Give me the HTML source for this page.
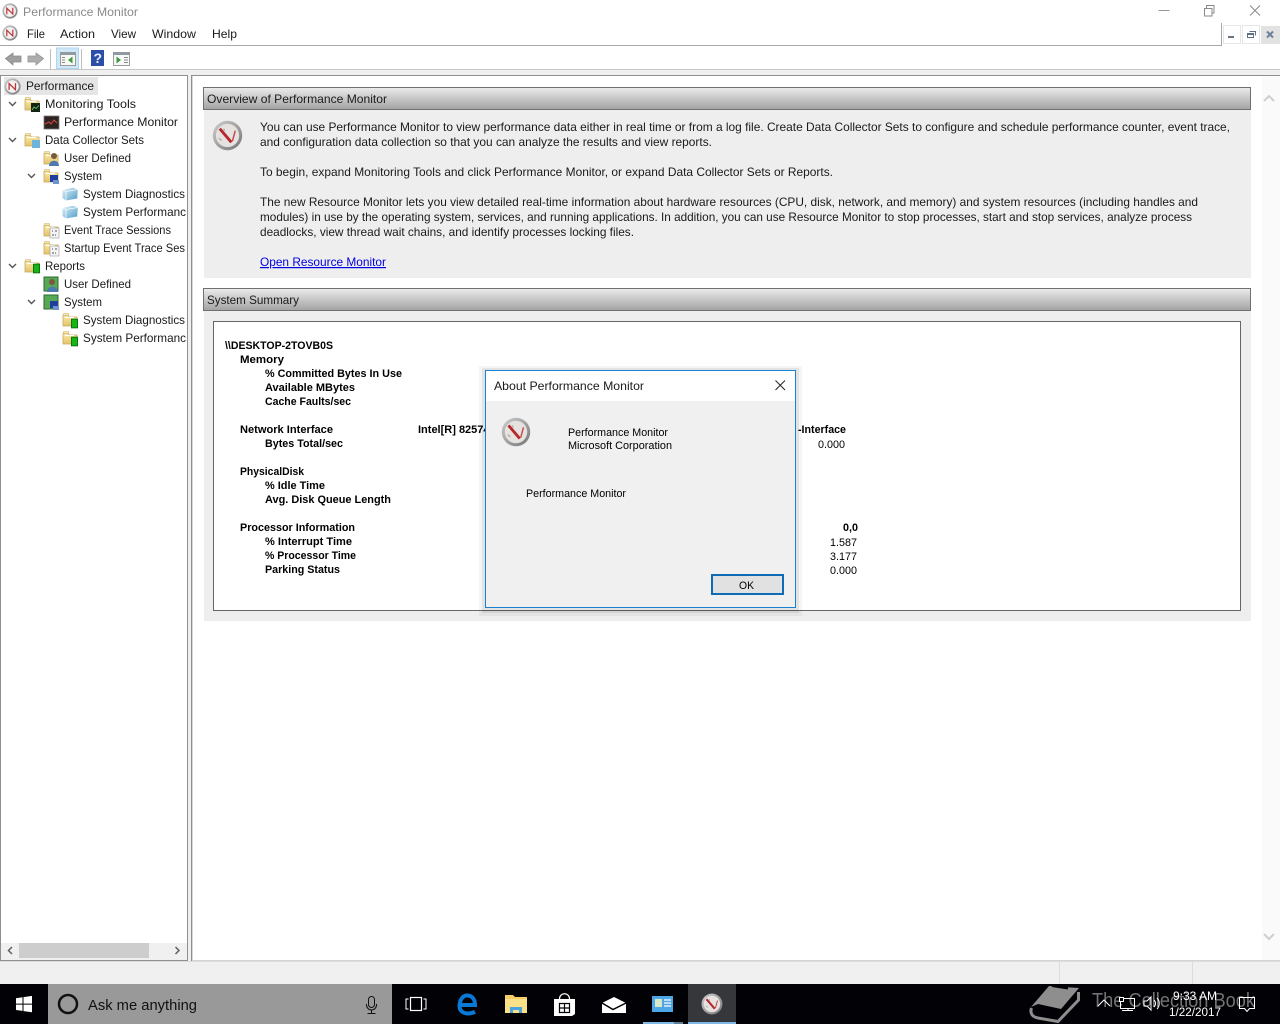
<!DOCTYPE html>
<html lang="en"><head><meta charset="utf-8"><title>Performance Monitor</title>
<style>
html,body{margin:0;padding:0;width:1280px;height:1024px;overflow:hidden;background:#fff}
svg{display:block;position:absolute;left:0;top:0}
text{font-family:"Liberation Sans",sans-serif;font-size:12px;fill:#1a1a1a;white-space:pre}
.b{font-weight:bold;font-size:11px;fill:#000}
.d{font-size:11px;fill:#000}
.p{font-size:12px;fill:#1a1a1a}
</style></head><body>
<svg width="1280" height="1024" viewBox="0 0 1280 1024" xmlns="http://www.w3.org/2000/svg">
<defs>
<linearGradient id="hd" x1="0" y1="0" x2="0" y2="1"><stop offset="0" stop-color="#ececec"/><stop offset="1" stop-color="#a2a2a2"/></linearGradient>
<linearGradient id="ring" x1="0" y1="0" x2="1" y2="1"><stop offset="0" stop-color="#cfcfcf"/><stop offset="1" stop-color="#757575"/></linearGradient>
<linearGradient id="fold" x1="0" y1="0" x2="0" y2="1"><stop offset="0" stop-color="#fbeaa6"/><stop offset="1" stop-color="#e3c26c"/></linearGradient>
<linearGradient id="cube" x1="0" y1="0" x2="1" y2="1"><stop offset="0" stop-color="#e2f2f9"/><stop offset="1" stop-color="#4f9ec9"/></linearGradient>
<symbol id="pm" viewBox="0 0 16 16"><circle cx="8" cy="8" r="7.600" fill="url(#ring)"/><circle cx="8" cy="8" r="5.900" fill="#f3f0f0"/><path d="M4.800 11.200V5.200L10.800 11V4.800" fill="none" stroke="#b8353a" stroke-width="1.200"/></symbol>
<symbol id="pmL" viewBox="0 0 32 32"><circle cx="16" cy="16" r="15.200" fill="url(#ring)"/><circle cx="16" cy="16" r="12" fill="#e6e2e0"/><path d="M8 9L20 23" stroke="#b5282c" stroke-width="3"/><path d="M21 22L24 11" stroke="#c2484a" stroke-width="1.500"/><path d="M7 19l3 2M12 9l1 2" stroke="#aaa" stroke-width="1.300"/></symbol>
<symbol id="folder" viewBox="0 0 16 16"><path d="M1 3.500h5l1.500 1.500H15V14H1z" fill="url(#fold)" stroke="#c9a95f" stroke-width=".8"/><path d="M1.500 1.500h5v2h-5z" fill="#f5e7b5" stroke="#cdb26f" stroke-width=".6"/><path d="M3 5.500h9" stroke="#fff" stroke-width="1"/></symbol>
<symbol id="cubeI" viewBox="0 0 16 14"><path d="M.5 3L11 .8 15.800 2.500 15.200 11.500 4 13.500 .5 11z" fill="url(#cube)"/><path d="M4 4.500V13.500M.5 3L4 4.500 15.800 2.500" fill="none" stroke="#f4fbfe" stroke-width=".8"/></symbol>
<symbol id="green" viewBox="0 0 8 11"><rect x=".5" y=".5" width="7" height="10" fill="#15b515" stroke="#0b6b0b"/></symbol>
</defs>

<!-- title -->
<use href="#pm" x="2" y="3" width="16" height="16"/>
<text x="23" y="16" textLength="115" lengthAdjust="spacingAndGlyphs" style="fill:#8a8a8a">Performance Monitor</text>
<path d="M1158.500 10.500h11" stroke="#999" stroke-width="1"/>
<rect x="1204.500" y="8.500" width="7.500" height="7.500" fill="#fff" stroke="#8a8a8a"/>
<path d="M1206.500 8V5.500h7.500v7.500h-2" fill="none" stroke="#8a8a8a"/>
<path d="M1250 5.500l10 10M1260 5.500l-10 10" stroke="#8a8a8a" stroke-width="1"/>

<!-- menu -->
<use href="#pm" x="2" y="25" width="16" height="16"/>
<text x="27" y="38" textLength="18" lengthAdjust="spacingAndGlyphs">File</text>
<text x="60" y="38" textLength="35" lengthAdjust="spacingAndGlyphs">Action</text>
<text x="111" y="38" textLength="25" lengthAdjust="spacingAndGlyphs">View</text>
<text x="152" y="38" textLength="44" lengthAdjust="spacingAndGlyphs">Window</text>
<text x="212" y="38" textLength="25" lengthAdjust="spacingAndGlyphs">Help</text>
<path d="M0 45.500H1221.500V23" fill="none" stroke="#a8a8a8"/>
<rect x="1223.500" y="25.500" width="17" height="18" fill="#fff" stroke="#e6e6e6"/>
<rect x="1242.500" y="25.500" width="17" height="18" fill="#fff" stroke="#e6e6e6"/>
<rect x="1261" y="26" width="19" height="18" fill="#e2e2e2"/>
<rect x="1228" y="36" width="6" height="2" fill="#6a7482"/>
<path d="M1247.500 33.500h6v4h-6zM1247.500 34.500h6M1249.500 31.500h6v4" fill="none" stroke="#5f6f85"/>
<path d="M1267 31.500l6 6M1273 31.500l-6 6" stroke="#6d8099" stroke-width="2"/>

<!-- toolbar -->
<path d="M5.500 58.500l7.500-5.500v3h8v6h-8v3z" fill="#9f9f9f" stroke="#8a8a8a" stroke-width=".8"/>
<path d="M43.500 58.500l-7.500-5.500v3h-8v6h8v3z" fill="#adadad" stroke="#949494" stroke-width=".8"/>
<path d="M50.500 49v20" stroke="#bdbdbd"/>
<rect x="56.500" y="48" width="22" height="20.500" fill="#cfe8f8" stroke="#aed6ef"/>
<rect x="60.500" y="52.500" width="15" height="13" fill="#f6f9f6" stroke="#9a9a9a"/>
<rect x="60.500" y="52.500" width="15" height="2.500" fill="#8f9aa3"/>
<path d="M62 57.500h3M62 60h3M62 62.500h3" stroke="#8a8a8a"/><path d="M72.500 56.500v7l-4.500-3.500z" fill="#3f9a3f"/>
<path d="M81.500 49v20" stroke="#bdbdbd"/>
<rect x="91" y="50" width="13" height="16" fill="#2b4fa6"/>
<text x="93.500" y="63" style="font-size:14px;font-weight:bold;fill:#e8eefc">?</text>
<rect x="113.500" y="52.500" width="16" height="13" fill="#f6f9f6" stroke="#9a9a9a"/>
<rect x="113.500" y="52.500" width="16" height="2.500" fill="#8f9aa3"/>
<path d="M124 57.500h4M124 60h4M124 62.500h4" stroke="#8a8a8a"/><path d="M116.500 56.500v7l4.500-3.500z" fill="#3f9a3f"/>
<path d="M0 69.500H1280" stroke="#c8c8c8"/>
<rect x="0" y="70" width="1280" height="891" fill="#f0f0f0"/>

<!-- left panel -->
<rect x=".5" y="75.500" width="187" height="885" fill="#fff" stroke="#8f8f8f"/>
<rect x="4" y="77" width="94" height="18" fill="#e5e5e5"/>
<g>
<use href="#pm" x="4" y="78" width="17" height="17"/>
<text x="26" y="90" textLength="68" lengthAdjust="spacingAndGlyphs">Performance</text>
<g fill="none" stroke="#555" stroke-width="1.400">
<path d="M9 102l3.500 3.500 3.500-3.500M9 138l3.500 3.500 3.500-3.500M9 264l3.500 3.500 3.500-3.500M28 174l3.500 3.500 3.500-3.500M28 300l3.500 3.500 3.500-3.500"/>
</g>
<use href="#folder" x="24" y="96" width="16" height="16"/>
<rect x="31" y="103" width="9" height="9" fill="#142414"/><path d="M32 110l2-3 2 1.500 3-3" stroke="#6fcf6f" fill="none" stroke-width=".8"/>
<text x="45" y="108" textLength="91" lengthAdjust="spacingAndGlyphs">Monitoring Tools</text>
<rect x="44" y="116" width="15" height="13" fill="#2d2422" stroke="#7a7a7a" stroke-width=".8"/><path d="M45 124l4-2 2 2 3-4 3 3" stroke="#d84b3c" fill="none"/>
<text x="64" y="126" textLength="114" lengthAdjust="spacingAndGlyphs">Performance Monitor</text>

<use href="#folder" x="24" y="132" width="16" height="16"/>
<rect x="32" y="140" width="8" height="8" fill="#6fb3da"/>
<text x="45" y="144" textLength="99" lengthAdjust="spacingAndGlyphs">Data Collector Sets</text>
<use href="#folder" x="43" y="150" width="16" height="16"/>
<circle cx="54" cy="156" r="3" fill="#7a5a3c"/><path d="M49 166c0-7 10-7 10 0z" fill="#4b79b0"/>
<text x="64" y="162" textLength="67" lengthAdjust="spacingAndGlyphs">User Defined</text>
<use href="#folder" x="43" y="168" width="16" height="16"/>
<rect x="50" y="175" width="8" height="7" fill="#1e3f9c"/><rect x="53" y="180" width="6" height="4" fill="#6e93cf"/>
<text x="64" y="180" textLength="38" lengthAdjust="spacingAndGlyphs">System</text>
<use href="#cubeI" x="62" y="187" width="16" height="14"/>
<text x="83" y="198" textLength="102" lengthAdjust="spacingAndGlyphs">System Diagnostics</text>
<use href="#cubeI" x="62" y="205" width="16" height="14"/>
<text x="83" y="216" textLength="103" lengthAdjust="spacingAndGlyphs">System Performanc</text>
<use href="#folder" x="43" y="222" width="16" height="16"/>
<rect x="50" y="228" width="9" height="10" fill="#f4f4f4" stroke="#999" stroke-width=".6"/><path d="M52 231h1M55 231h2M52 235h2M55 235h1" stroke="#555"/>
<text x="64" y="234" textLength="107" lengthAdjust="spacingAndGlyphs">Event Trace Sessions</text>
<use href="#folder" x="43" y="240" width="16" height="16"/>
<rect x="50" y="246" width="9" height="10" fill="#f4f4f4" stroke="#999" stroke-width=".6"/><path d="M52 249h1M55 249h2M52 253h2M55 253h1" stroke="#555"/>
<text x="64" y="252" textLength="121" lengthAdjust="spacingAndGlyphs">Startup Event Trace Ses</text>

<use href="#folder" x="24" y="258" width="16" height="16"/>
<use href="#green" x="33" y="263" width="7" height="11"/>
<text x="45" y="270" textLength="40" lengthAdjust="spacingAndGlyphs">Reports</text>
<rect x="44" y="277" width="14" height="14" fill="#57a857" stroke="#2e6b2e"/>
<circle cx="52" cy="282" r="3" fill="#7a5a3c"/><path d="M47 292c0-7 11-7 11 0z" fill="#4b79b0"/>
<text x="64" y="288" textLength="67" lengthAdjust="spacingAndGlyphs">User Defined</text>
<rect x="44" y="295" width="14" height="14" fill="#57a857" stroke="#2e6b2e"/>
<rect x="50" y="301" width="8" height="7" fill="#1e3f9c"/><rect x="53" y="306" width="6" height="4" fill="#6e93cf"/>
<text x="64" y="306" textLength="38" lengthAdjust="spacingAndGlyphs">System</text>
<use href="#folder" x="62" y="312" width="16" height="16"/>
<use href="#green" x="71" y="318" width="7" height="11"/>
<text x="83" y="324" textLength="102" lengthAdjust="spacingAndGlyphs">System Diagnostics</text>
<use href="#folder" x="62" y="330" width="16" height="16"/>
<use href="#green" x="71" y="336" width="7" height="11"/>
<text x="83" y="342" textLength="103" lengthAdjust="spacingAndGlyphs">System Performanc</text>
</g>
<!-- left scrollbar -->
<rect x="1" y="943" width="186" height="17" fill="#f0f0f0"/>
<rect x="19" y="943" width="130" height="15" fill="#cdcdcd"/>
<path d="M12 947l-3.500 3.500 3.500 3.500M175.500 947l3.500 3.500-3.500 3.500" fill="none" stroke="#606060" stroke-width="1.500"/>

<!-- right panel -->
<rect x="192" y="76" width="1088" height="885" fill="#fff"/>
<path d="M191.500 961V75.500H1280" fill="none" stroke="#8f8f8f"/>
<path d="M192.500 960V76" stroke="#d8d8d8"/>
<path d="M192 960.500H1280" stroke="#d4d4d4"/>
<rect x="1262" y="77" width="18" height="883" fill="#fafafa"/>
<path d="M1264 101l5-5 5 5" fill="none" stroke="#cfcfcf" stroke-width="2"/>
<path d="M1264 934l5 5 5-5" fill="none" stroke="#cfcfcf" stroke-width="2"/>

<rect x="204" y="110" width="1047" height="168" fill="#eeeeee"/>
<rect x="203.500" y="87.500" width="1047" height="22" fill="url(#hd)" stroke="#707070"/>
<text x="207" y="103" textLength="180" lengthAdjust="spacingAndGlyphs">Overview of Performance Monitor</text>
<use href="#pmL" x="212" y="120" width="31" height="31"/>
<text class="p" x="260" y="131" textLength="970" lengthAdjust="spacingAndGlyphs">You can use Performance Monitor to view performance data either in real time or from a log file. Create Data Collector Sets to configure and schedule performance counter, event trace,</text>
<text class="p" x="260" y="146" textLength="452" lengthAdjust="spacingAndGlyphs">and configuration data collection so that you can analyze the results and view reports.</text>
<text class="p" x="260" y="176" textLength="573" lengthAdjust="spacingAndGlyphs">To begin, expand Monitoring Tools and click Performance Monitor, or expand Data Collector Sets or Reports.</text>
<text class="p" x="260" y="206" textLength="938" lengthAdjust="spacingAndGlyphs">The new Resource Monitor lets you view detailed real-time information about hardware resources (CPU, disk, network, and memory) and system resources (including handles and</text>
<text class="p" x="260" y="221" textLength="932" lengthAdjust="spacingAndGlyphs">modules) in use by the operating system, services, and running applications. In addition, you can use Resource Monitor to stop processes, start and stop services, analyze process</text>
<text class="p" x="260" y="236" textLength="374" lengthAdjust="spacingAndGlyphs">deadlocks, view thread wait chains, and identify processes locking files.</text>
<text class="p" x="260" y="266" textLength="126" lengthAdjust="spacingAndGlyphs" style="fill:#0000e0;text-decoration:underline">Open Resource Monitor</text>

<rect x="204" y="311" width="1047" height="310" fill="#eeeeee"/>
<rect x="203.500" y="288.500" width="1047" height="22" fill="url(#hd)" stroke="#707070"/>
<text x="207" y="304" textLength="92" lengthAdjust="spacingAndGlyphs">System Summary</text>
<rect x="213.500" y="321.500" width="1027" height="289" fill="#fff" stroke="#666"/>

<text class="b" x="225" y="349" textLength="108" lengthAdjust="spacingAndGlyphs">\\DESKTOP-2TOVB0S</text>
<text class="b" x="240" y="363" textLength="44" lengthAdjust="spacingAndGlyphs">Memory</text>
<text class="b" x="265" y="377" textLength="137" lengthAdjust="spacingAndGlyphs">% Committed Bytes In Use</text>
<text class="b" x="265" y="391" textLength="90" lengthAdjust="spacingAndGlyphs">Available MBytes</text>
<text class="b" x="265" y="405" textLength="86" lengthAdjust="spacingAndGlyphs">Cache Faults/sec</text>
<text class="b" x="240" y="433" textLength="93" lengthAdjust="spacingAndGlyphs">Network Interface</text>
<text class="b" x="418" y="433">Intel[R] 82574L</text>
<text class="b" x="798" y="433" textLength="48" lengthAdjust="spacingAndGlyphs">-Interface</text>
<text class="b" x="265" y="447" textLength="78" lengthAdjust="spacingAndGlyphs">Bytes Total/sec</text>
<text class="d" x="818" y="448" textLength="27" lengthAdjust="spacingAndGlyphs">0.000</text>
<text class="b" x="240" y="475" textLength="64" lengthAdjust="spacingAndGlyphs">PhysicalDisk</text>
<text class="b" x="265" y="489" textLength="60" lengthAdjust="spacingAndGlyphs">% Idle Time</text>
<text class="b" x="265" y="503" textLength="126" lengthAdjust="spacingAndGlyphs">Avg. Disk Queue Length</text>
<text class="b" x="240" y="531" textLength="115" lengthAdjust="spacingAndGlyphs">Processor Information</text>
<text class="b" x="843" y="531" textLength="15" lengthAdjust="spacingAndGlyphs">0,0</text>
<text class="b" x="265" y="545" textLength="87" lengthAdjust="spacingAndGlyphs">% Interrupt Time</text>
<text class="d" x="830" y="546" textLength="27" lengthAdjust="spacingAndGlyphs">1.587</text>
<text class="b" x="265" y="559" textLength="91" lengthAdjust="spacingAndGlyphs">% Processor Time</text>
<text class="d" x="830" y="560" textLength="27" lengthAdjust="spacingAndGlyphs">3.177</text>
<text class="b" x="265" y="573" textLength="75" lengthAdjust="spacingAndGlyphs">Parking Status</text>
<text class="d" x="830" y="574" textLength="27" lengthAdjust="spacingAndGlyphs">0.000</text>

<!-- dialog shadow + dialog -->
<rect x="479" y="366" width="323" height="250" fill="#000" opacity=".04"/>
<rect x="482" y="368" width="317" height="245" fill="#000" opacity=".07"/>
<rect x="485.500" y="370.500" width="310" height="237" fill="#f0f0f0" stroke="#1b82cf"/>
<rect x="486" y="371" width="309" height="30" fill="#fff"/>
<text x="494" y="390" textLength="150" lengthAdjust="spacingAndGlyphs">About Performance Monitor</text>
<path d="M775.500 380.500l9.500 9.500M785 380.500l-9.500 9.500" stroke="#222" stroke-width="1"/>
<use href="#pmL" x="501" y="417" width="30" height="30"/>
<text class="d" x="568" y="436" textLength="100" lengthAdjust="spacingAndGlyphs">Performance Monitor</text>
<text class="d" x="568" y="449" textLength="104" lengthAdjust="spacingAndGlyphs">Microsoft Corporation</text>
<text class="d" x="526" y="497" textLength="100" lengthAdjust="spacingAndGlyphs">Performance Monitor</text>
<rect x="712" y="575" width="71" height="19" fill="#e1e1e1" stroke="#0f6cb4" stroke-width="2"/>
<text class="d" x="739" y="589" textLength="15" lengthAdjust="spacingAndGlyphs">OK</text>

<!-- status bar -->
<rect x="0" y="961" width="1280" height="23" fill="#f0f0f0"/>
<path d="M0 961.500H1280" stroke="#dcdcdc"/>
<path d="M1059.500 962v22M1192.500 962v22" stroke="#dcdcdc"/>

<!-- taskbar -->
<rect x="0" y="984" width="1280" height="40" fill="#020206"/>
<path d="M16 998.200l6.500-.9v6.300H16zM23.500 997.100l8.500-1.200v7.700h-8.500zM16 1004.600h6.500v6.300l-6.500-.9zM23.500 1004.600H32v7.700l-8.500-1.200z" fill="#fff"/>
<rect x="48" y="984" width="344" height="40" fill="#999999"/>
<circle cx="68" cy="1004" r="9" fill="none" stroke="#111" stroke-width="2.500"/>
<text x="88" y="1010" textLength="109" lengthAdjust="spacingAndGlyphs" style="font-size:15px;fill:#111">Ask me anything</text>
<rect x="368.500" y="996.500" width="6" height="11" rx="3" fill="none" stroke="#111"/>
<path d="M366.500 1004v1a5 5 0 0 0 10 0v-1M371.500 1010v3M367.500 1013.500h8" fill="none" stroke="#111"/>
<!-- task view -->
<rect x="410.500" y="997.500" width="11" height="13" fill="none" stroke="#fff" stroke-width="1.200"/>
<path d="M408.500 999h-2.500v10h2.500M423.500 999h2.500v10h-2.500" fill="none" stroke="#fff"/>
<!-- edge -->
<path d="M460 1005H475C475 998 471 995.500 467 995.500C461.500 995.500 459.500 1002 459.500 1006C459.500 1011.500 464 1013.500 468 1013.500C471 1013.500 473 1012.800 475 1011.800" fill="none" stroke="#0a78d6" stroke-width="4"/>
<!-- explorer -->
<path d="M505 995h8l2 2h12v16h-22z" fill="#f5cf63"/><rect x="505" y="999" width="22" height="14" fill="#fbe08a"/><path d="M510 1013v-6h12v6h-3v-3h-6v3z" fill="#4aa3dc"/>
<!-- store -->
<path d="M554 999h21v15l-3 2h-18z" fill="#fff"/><path d="M559.500 999c0-7 10-7 10 0" fill="none" stroke="#fff" stroke-width="1.200"/>
<path d="M559.500 1003.500h10v9h-10zM564.500 1003.500v9M559.500 1008h10" fill="none" stroke="#020206" stroke-width="1.200"/>
<!-- mail -->
<path d="M602 1003l12-6 12 6v10h-24z" fill="#fff"/><path d="M602 1003l11 6.500 13-6.500" fill="none" stroke="#020206" stroke-width="1.500"/>
<!-- control panel -->
<rect x="652" y="996" width="21" height="16" fill="#4ea6e6"/><rect x="655" y="999" width="7" height="8" fill="#d8e8c8"/><path d="M664 1000h7M664 1003h7M664 1006h7" stroke="#fff" stroke-width="1.200"/>
<rect x="643" y="1022" width="31" height="2" fill="#7db9e4"/><rect x="674" y="1022" width="9" height="2" fill="#5d7f97"/>
<!-- perfmon active -->
<rect x="688" y="984" width="48" height="40" fill="#35373a"/>
<rect x="688" y="1022" width="48" height="2" fill="#7db9e4"/>
<use href="#pmL" x="701" y="993" width="22" height="22"/>

<!-- watermark -->
<path d="M1031 1007L1049 986 1079 988 1061 1009 1038 1004z" fill="#8e8e8e"/>
<path d="M1052 985.500l16 2.500" stroke="#020206" stroke-width="3"/>
<path d="M1031.500 1008C1029.500 1014 1033 1017 1038 1018L1058 1021.500 1078.500 1000V992" fill="none" stroke="#8e8e8e" stroke-width="3"/>
<text x="1092" y="1007" textLength="163" lengthAdjust="spacingAndGlyphs" style="font-size:20px;fill:#727272">The Collection Book</text>

<!-- tray -->
<path d="M1098 1006l6-6 6 6" fill="none" stroke="#fff"/>
<rect x="1120.500" y="998.500" width="14" height="10" fill="none" stroke="#fff"/>
<rect x="1119.500" y="997.500" width="4" height="4" fill="#020206" stroke="#fff"/>
<path d="M1128 1008.500v2M1122 1010.500h11" stroke="#fff"/>
<path d="M1144 1001h3l4-4v13l-4-4h-3zM1154 1000c2 2 2 5 0 7M1157 998c3 3 3 8 0 11" fill="none" stroke="#fff"/>
<text x="1173" y="1000" textLength="44" lengthAdjust="spacingAndGlyphs" style="fill:#fff">9:33 AM</text>
<text x="1169" y="1016" textLength="52" lengthAdjust="spacingAndGlyphs" style="fill:#fff">1/22/2017</text>
<path d="M1239.500 997.500h15v11h-5l-2.500 3-2.500-3h-5z" fill="none" stroke="#fff"/>
</svg>
</body></html>
